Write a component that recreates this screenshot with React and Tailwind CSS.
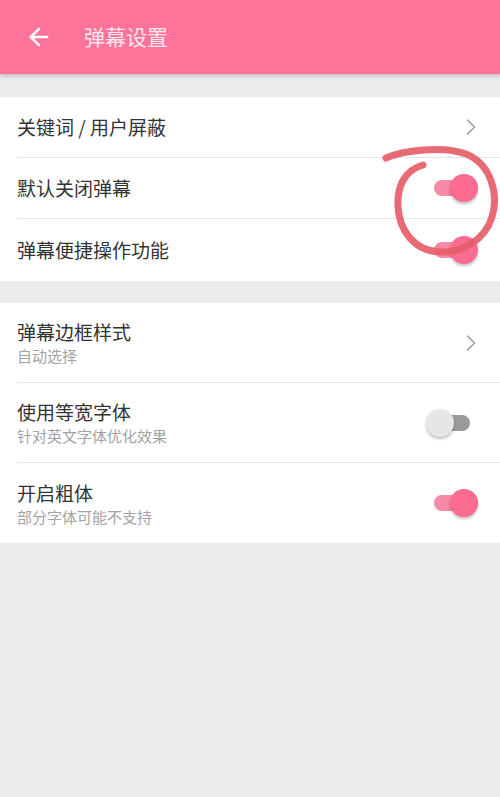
import { ArrowLeft, ChevronRight } from 'lucide-react';

const font = { fontFamily: '"Noto Sans CJK SC", "Noto Sans", sans-serif' };

const Toggle = ({ on }) => (
  <div className="relative w-[52px] h-[28px] flex items-center">
    <div className={`absolute left-[8px] w-[36px] h-[16px] rounded-full ${on ? 'bg-[#f68aa7]' : 'bg-[#9a9a9a]'}`} />
    <div
      className={`absolute top-0 w-[28px] h-[28px] rounded-full shadow-[0_2px_3px_rgba(0,0,0,0.25)] ${on ? 'right-0 bg-[#fb6b92]' : 'left-0 bg-[#e6e6e6]'}`}
    />
  </div>
);

const Row = ({ title, sub, right, last, tall }) => (
  <div className="pl-[17px]">
    <div
      className={`flex items-center justify-between pr-[22px] ${sub ? 'h-[80px]' : tall ? 'h-[62px]' : 'h-[61px]'} ${last ? '' : 'border-b border-[#e6e6e6]'}`}
    >
      <div className="flex flex-col">
        <span className="text-[19px] leading-[26px] text-[#333333]">{title}</span>
        {sub && <span className="text-[15px] leading-[20px] text-[#a3a3a3] mt-[1px]">{sub}</span>}
      </div>
      {right}
    </div>
  </div>
);

const Chevron = () => <ChevronRight className="w-[28px] h-[28px] text-[#9a9a9a] -mr-[7px]" strokeWidth={1.3} />;

export default function App() {
  return (
    <div className="w-[500px] h-[797px] bg-[#ebebeb] relative overflow-hidden" style={font}>
      <div className="h-[74px] bg-[#fd7399] flex items-center shadow-[0_2px_4px_rgba(0,0,0,0.2)] relative">
        <ArrowLeft className="ml-[25px] w-[28px] h-[28px] text-white" strokeWidth={2.2} />
        <span className="ml-[31px] text-[21px] text-[#fde8ef]">弹幕设置</span>
      </div>

      <div className="mt-[23px] bg-white">
        <Row title="关键词 / 用户屏蔽" right={<Chevron />} />
        <Row title="默认关闭弹幕" right={<Toggle on />} />
        <Row title="弹幕便捷操作功能" right={<Toggle on />} last tall />
      </div>

      <div className="mt-[22px] bg-white">
        <Row title="弹幕边框样式" sub="自动选择" right={<Chevron />} />
        <Row title="使用等宽字体" sub="针对英文字体优化效果" right={<Toggle />} />
        <Row title="开启粗体" sub="部分字体可能不支持" right={<Toggle on />} last />
      </div>

      <svg className="absolute left-0 top-0 pointer-events-none" width="500" height="797">
        <path
          d="M386,158 C402,151 442,145 466,154 C491,164 499,194 492,217 C485,240 462,253 440,252 C414,251 399,230 398,206 C397,186 405,170 423,165"
          fill="none"
          stroke="#e65d68"
          strokeWidth="7"
          strokeLinecap="round"
          opacity="0.92"
        />
      </svg>
    </div>
  );
}
